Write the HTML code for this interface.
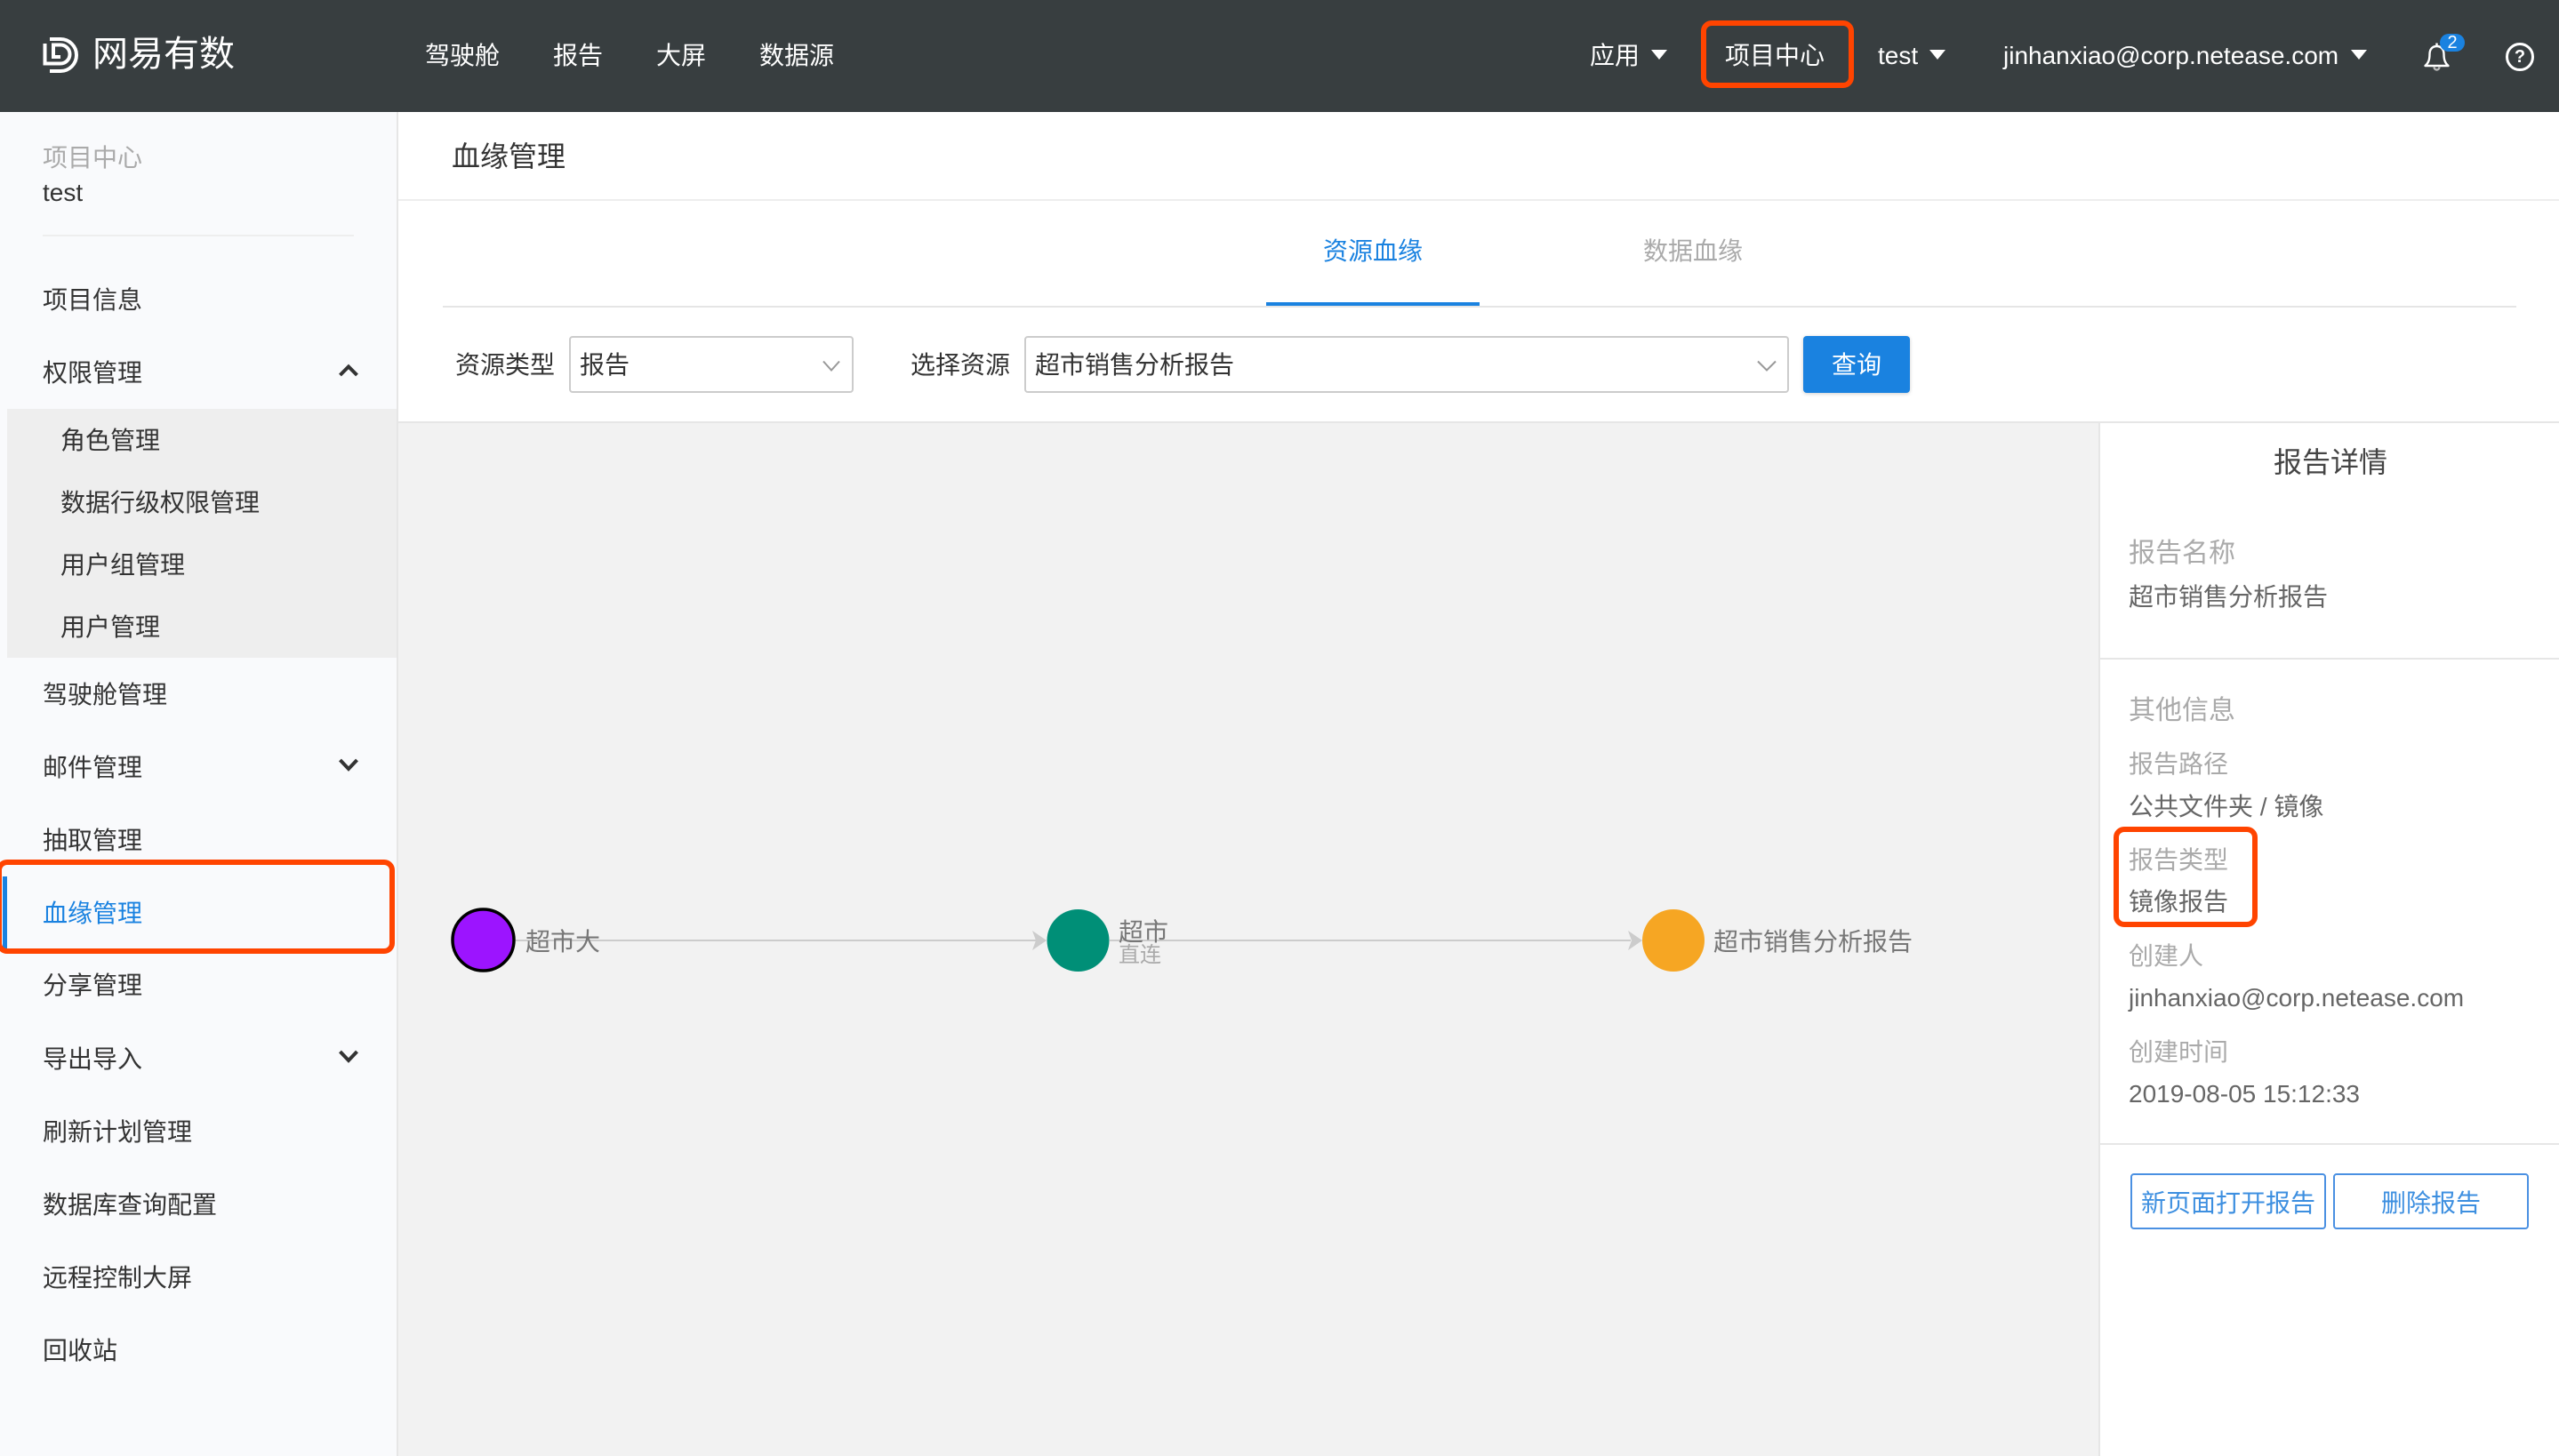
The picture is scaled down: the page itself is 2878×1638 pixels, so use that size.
<!DOCTYPE html>
<html lang="zh">
<head>
<meta charset="utf-8">
<title>血缘管理</title>
<style>
html,body{margin:0;padding:0;background:#fff}
body{width:2878px;height:1638px;overflow:hidden;position:relative;font-family:"Liberation Sans","Noto Sans CJK SC",sans-serif;font-size:28px;color:#333}
.a{position:absolute}
.t{position:absolute;white-space:nowrap;line-height:40px;height:40px;transform:translateY(2px)}
.l{transform:translateY(1px)}
.n{transform:none}
.w{color:#fff}
.g{color:#aaa}
.d{color:#666}
.box{position:absolute;box-sizing:border-box;border:6px solid #ff4400;border-radius:12px}
.caret{position:absolute;width:0;height:0;border-left:9px solid transparent;border-right:9px solid transparent;border-top:11px solid #fff}
svg{position:absolute;overflow:visible}
.sel{position:absolute;box-sizing:border-box;border:2px solid #ccc;border-radius:4px;background:#fff;top:378px;height:64px}
.btn{position:absolute;box-sizing:border-box;border:2px solid #4a90e2;border-radius:4px;top:1320px;height:63px;color:#3d8fe0;text-align:center;line-height:63px}
</style>
</head>
<body>
<!-- top bar -->
<div class="a" style="left:0;top:0;width:2878px;height:126px;background:#383e40"></div>
<svg style="left:0;top:0" width="100" height="100" fill="none" stroke="#fff" stroke-width="4">
<path d="M56 44H68A18 18 0 0 1 68 80H56"/>
<path d="M50.500 49V71.500H68A10.500 10.500 0 0 0 68 50.500H60V64H68"/>
</svg>
<div class="t w l" style="left:104px;top:40px;font-size:40px">网易有数</div>
<div class="t w l" style="left:478px;top:42px">驾驶舱</div>
<div class="t w l" style="left:622px;top:42px">报告</div>
<div class="t w l" style="left:738px;top:42px">大屏</div>
<div class="t w l" style="left:854px;top:42px">数据源</div>
<div class="t w l" style="left:1788px;top:42px">应用</div>
<div class="caret" style="left:1857px;top:56px"></div>
<div class="box" style="left:1913px;top:23px;width:172px;height:76px"></div>
<div class="t w l" style="left:1940px;top:42px">项目中心</div>
<div class="t w l" style="left:2112px;top:42px">test</div>
<div class="caret" style="left:2170px;top:56px"></div>
<div class="t w l" style="left:2253px;top:42px">jinhanxiao@corp.netease.com</div>
<div class="caret" style="left:2644px;top:56px"></div>
<svg style="left:2724px;top:46px" width="34" height="36" fill="none" stroke="#fff" stroke-width="2.4" stroke-linejoin="round">
<path d="M3.500 28C7 25 8.500 21.500 8.500 15C8.500 9 12 6 16.500 6C21 6 24.500 9 24.500 15C24.500 21.500 26 25 29.500 28Z"/>
<path d="M16.500 2.500V6"/>
<path d="M13.500 29.500C14 33.500 19 33.500 19.500 29.500" stroke="#bbb"/>
</svg>
<div class="a" style="left:2744px;top:38px;width:28px;height:20px;background:#1a82e0;border-radius:10px;color:#fff;font-size:20px;line-height:20px;text-align:center">2</div>
<div class="a" style="left:2818px;top:48px;width:32px;height:32px;box-sizing:border-box;border:3px solid #fff;border-radius:50%;color:#fff;font-size:20px;font-weight:bold;line-height:27px;text-align:center">?</div>

<!-- sidebar -->
<div class="a" style="left:0;top:126px;width:446px;height:1512px;background:#f9fafc;border-right:2px solid #e6e6e6"></div>
<div class="t g" style="left:48px;top:156px">项目中心</div>
<div class="t l" style="left:48px;top:196px">test</div>
<div class="a" style="left:48px;top:264px;width:350px;height:2px;background:#eeeeee"></div>
<div class="t" style="left:48px;top:316px">项目信息</div>
<div class="t" style="left:48px;top:398px">权限管理</div>
<svg style="left:0;top:0" width="449" height="1300" fill="none" stroke="#333" stroke-width="4">
<path d="M382.500 422L392 412.500L401.500 422"/>
<path d="M382.500 855L392 865L401.500 855"/>
<path d="M382.500 1183L392 1193L401.500 1183"/>
</svg>
<div class="a" style="left:8px;top:460px;width:438px;height:280px;background:#eeeeee"></div>
<div class="t" style="left:68px;top:474px">角色管理</div>
<div class="t" style="left:68px;top:544px">数据行级权限管理</div>
<div class="t" style="left:68px;top:614px">用户组管理</div>
<div class="t" style="left:68px;top:684px">用户管理</div>
<div class="t" style="left:48px;top:760px">驾驶舱管理</div>
<div class="t" style="left:48px;top:842px">邮件管理</div>
<div class="t" style="left:48px;top:924px">抽取管理</div>
<div class="a" style="left:3px;top:986px;width:5px;height:82px;background:#1a82e0"></div>
<div class="t" style="left:48px;top:1006px;color:#1a82e0">血缘管理</div>
<div class="box" style="left:-4px;top:967px;width:448px;height:106px"></div>
<div class="t" style="left:48px;top:1087px">分享管理</div>
<div class="t" style="left:48px;top:1170px">导出导入</div>
<div class="t" style="left:48px;top:1252px">刷新计划管理</div>
<div class="t" style="left:48px;top:1334px">数据库查询配置</div>
<div class="t" style="left:48px;top:1416px">远程控制大屏</div>
<div class="t" style="left:48px;top:1498px">回收站</div>

<!-- main header -->
<div class="t l" style="left:508px;top:155px;font-size:32px">血缘管理</div>
<div class="a" style="left:448px;top:224px;width:2430px;height:2px;background:#eeeeee"></div>
<div class="a" style="left:498px;top:344px;width:2332px;height:2px;background:#e5e5e5"></div>
<div class="a" style="left:1424px;top:340px;width:240px;height:4px;background:#1a82e0"></div>
<div class="t l" style="left:1488px;top:262px;color:#1a82e0">资源血缘</div>
<div class="t g l" style="left:1848px;top:262px">数据血缘</div>

<!-- toolbar -->
<div class="t l" style="left:512px;top:390px">资源类型</div>
<div class="sel" style="left:640px;width:320px"></div>
<div class="t l" style="left:652px;top:390px">报告</div>
<div class="t l" style="left:1024px;top:390px">选择资源</div>
<div class="sel" style="left:1152px;width:860px"></div>
<div class="t l" style="left:1164px;top:390px">超市销售分析报告</div>
<svg style="left:0;top:0" width="2100" height="450" fill="none" stroke="#999" stroke-width="2">
<path d="M926 406.500L935 416.500L944 406.500"/>
<path d="M1977 406.500L1987 416.500L1997 406.500"/>
</svg>
<div class="a" style="left:2028px;top:378px;width:120px;height:64px;background:#1a82e0;border-radius:4px;box-shadow:0 1px 4px rgba(0,0,0,.2);color:#fff;text-align:center;line-height:65px">查询</div>
<div class="a" style="left:448px;top:474px;width:2430px;height:2px;background:#e6e6e6"></div>

<!-- graph -->
<div class="a" style="left:448px;top:476px;width:1912px;height:1162px;background:#f2f2f2"></div>
<svg style="left:0;top:0" width="2360" height="1200">
<path d="M580 1058H1165M1248 1058H1834" stroke="#cccccc" stroke-width="2" fill="none"/>
<path d="M1161 1047L1177 1058L1161 1069L1165 1058Z" fill="#cccccc"/>
<path d="M1831 1047L1847 1058L1831 1069L1835 1058Z" fill="#cccccc"/>
<circle cx="543.500" cy="1057.500" r="34.500" fill="#9c14ff" stroke="#000" stroke-width="3.500"/>
<circle cx="1212.500" cy="1058" r="35" fill="#008f77"/>
<circle cx="1882" cy="1058" r="35" fill="#f6a623"/>
</svg>
<div class="t" style="left:591px;top:1038px;color:#777">超市大</div>
<div class="t" style="left:1258px;top:1027px;color:#777">超市</div>
<div class="t" style="left:1258px;top:1053px;color:#aaa;font-size:24px">直连</div>
<div class="t" style="left:1927px;top:1038px;color:#777">超市销售分析报告</div>

<!-- detail panel -->
<div class="a" style="left:2360px;top:476px;width:2px;height:1162px;background:#e6e6e6"></div>
<div class="t" style="left:2557px;top:498px;font-size:32px;color:#444">报告详情</div>
<div class="t g" style="left:2394px;top:601px;font-size:30px">报告名称</div>
<div class="t d" style="left:2394px;top:650px">超市销售分析报告</div>
<div class="a" style="left:2362px;top:740px;width:516px;height:2px;background:#e6e6e6"></div>
<div class="t g" style="left:2394px;top:778px;font-size:30px">其他信息</div>
<div class="t g" style="left:2394px;top:838px">报告路径</div>
<div class="t d" style="left:2394px;top:886px">公共文件夹 / 镜像</div>
<div class="t g l" style="left:2394px;top:947px">报告类型</div>
<div class="t d l" style="left:2394px;top:994px">镜像报告</div>
<div class="box" style="left:2377px;top:930px;width:162px;height:113px"></div>
<div class="t g" style="left:2394px;top:1054px">创建人</div>
<div class="t d n" style="left:2394px;top:1103px">jinhanxiao@corp.netease.com</div>
<div class="t g" style="left:2394px;top:1162px">创建时间</div>
<div class="t d n" style="left:2394px;top:1211px">2019-08-05 15:12:33</div>
<div class="a" style="left:2362px;top:1286px;width:516px;height:2px;background:#e6e6e6"></div>
<div class="btn" style="left:2396px;width:220px">新页面打开报告</div>
<div class="btn" style="left:2624px;width:220px">删除报告</div>
</body>
</html>
